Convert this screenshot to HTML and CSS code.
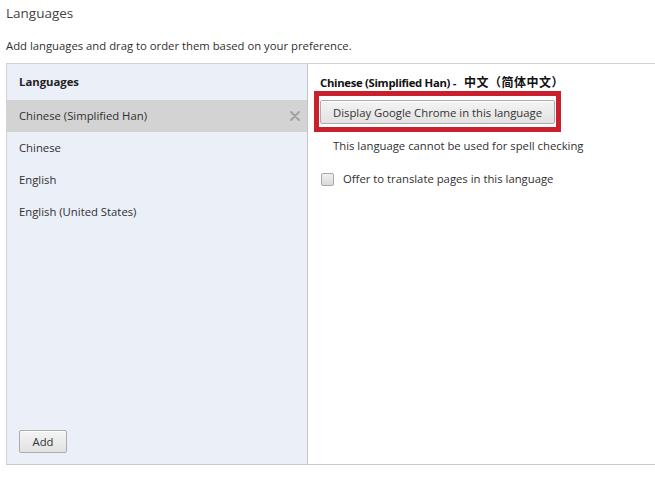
FILE: index.html
```html
<!DOCTYPE html>
<html>
<head>
<meta charset="utf-8">
<link rel="stylesheet" href="styles.css">
</head>
<body>
<div class="page">
  <h1 class="title">Languages</h1>
  <p class="desc">Add languages and drag to order them based on your preference.</p>
  <div class="box">
    <div class="list">
      <div class="list-head">Languages</div>
      <div class="row selected"><span>Chinese (Simplified Han)</span>
        <svg class="close" width="10" height="10" viewBox="0 0 10 10"><path d="M1 1L9 9M9 1L1 9" stroke="#a0a0a0" stroke-width="1.8" stroke-linecap="round"/></svg>
      </div>
      <div class="row">Chinese</div>
      <div class="row">English</div>
      <div class="row">English (United States)</div>
      <div class="spacer"></div>
      <div class="list-foot"><button class="btn add">Add</button></div>
    </div>
    <div class="detail">
      <div class="detail-head"><span class="latin">Chinese (Simplified Han) -</span><span class="cjk">中文（简体中文）</span></div>
      <div class="highlight"><button class="btn display">Display Google Chrome in this language</button></div>
      <div class="note">This language cannot be used for spell checking</div>
      <label class="check"><span class="box-check"></span>Offer to translate pages in this language</label>
    </div>
  </div>
</div>
</body>
</html>
```

FILE: styles.css
```css
html, body {
  margin: 0;
  padding: 0;
  background: #fff;
}
body {
  font-family: "Segoe UI", "Open Sans", "Noto Sans", "Noto Sans CJK SC", sans-serif;
  font-size: 11.3px;
  color: #303030;
}
.page {
  padding: 0 0 0 6px;
}
.title {
  margin: 0;
  padding-top: 3px;
  font-size: 13.5px;
  font-weight: normal;
  line-height: 20px;
  color: #444;
}
.desc {
  margin: 0;
  padding-top: 14px;
  line-height: 18px;
  color: #303030;
}
.box {
  margin-top: 8px;
  display: flex;
  height: 400px;
  border-top: 1px solid #d2d2d2;
  border-bottom: 1px solid #c8c8c8;
  border-left: 1px solid #d2d2d2;
}
.list {
  width: 300px;
  background: #eaeff8;
  border-right: 1px solid #c4c4c4;
  display: flex;
  flex-direction: column;
}
.list-head {
  height: 36px;
  line-height: 36px;
  padding-left: 12px;
  font-weight: bold;
  color: #222;
}
.row {
  height: 32px;
  line-height: 32px;
  padding-left: 12px;
  padding-right: 7px;
  display: flex;
  align-items: center;
  justify-content: space-between;
}
.row.selected {
  background: #d3d3d3;
}
.close {
  display: block;
}
.spacer {
  flex: 1;
}
.list-foot {
  padding: 0 0 11px 12px;
}
.btn {
  font-family: inherit;
  font-size: 11.3px;
  color: #333;
  border: 1px solid #acacac;
  border-radius: 2px;
  background: linear-gradient(#f4f4f4, #e2e2e2);
  box-shadow: inset 0 1px 0 #fff;
  padding: 0;
  height: 23px;
}
.add {
  width: 48px;
}
.detail {
  flex: 1;
  padding-left: 6px;
}
.detail-head {
  height: 36px;
  line-height: 36px;
  padding-left: 6px;
  font-weight: bold;
  color: #111;
  margin-bottom: -9px;
  white-space: nowrap;
}
.latin {
  letter-spacing: -0.3px;
}
.cjk {
  font-family: "Noto Sans CJK SC", sans-serif;
  font-size: 12px;
  margin-left: 8px;
  letter-spacing: 0.5px;
}
.highlight {
  display: inline-block;
  border: 5px solid #c8202c;
  padding: 4px 1px 3px 1px;
}
.display {
  width: 235px;
  height: 24px;
}
.note {
  padding-left: 19px;
  line-height: 20px;
  margin-top: 4px;
}
.check {
  display: flex;
  align-items: center;
  margin-top: 15px;
  padding-left: 7px;
  line-height: 16px;
}
.box-check {
  width: 11px;
  height: 11px;
  border: 1px solid #a8a8a8;
  border-radius: 2px;
  background: linear-gradient(#f0f0f0, #dadada);
  margin-right: 9px;
}
```
